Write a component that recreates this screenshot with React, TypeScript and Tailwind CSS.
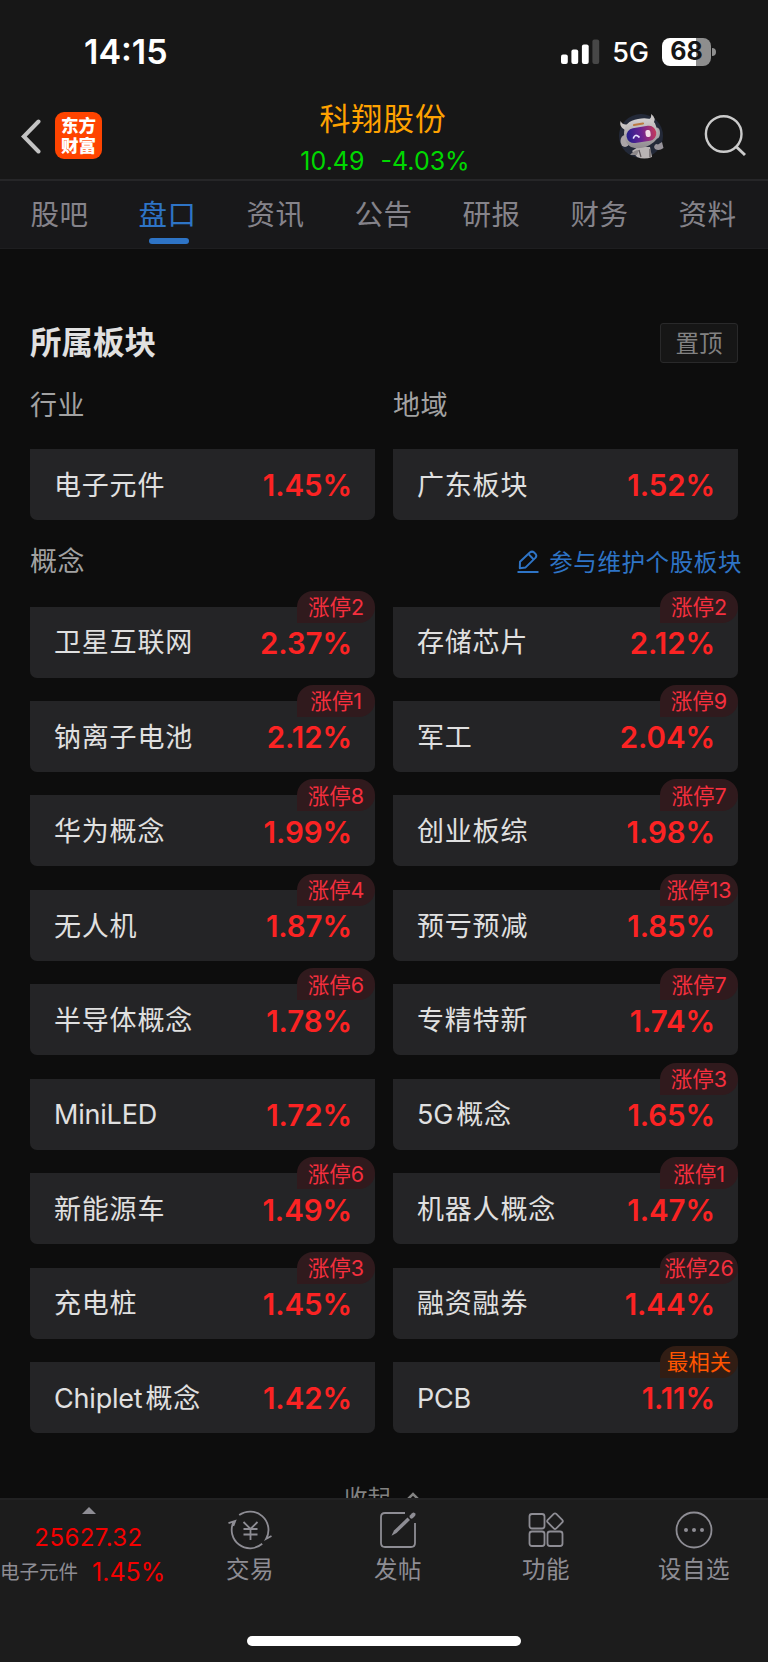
import React from 'react';

interface Board {
  name: string;
  latin?: string;
  change: string;
  tag?: string;
  hot?: boolean;
}

const tabs = ['股吧', '盘口', '资讯', '公告', '研报', '财务', '资料'];

const concepts: Board[] = [
  { name: '卫星互联网', change: '2.37%', tag: '涨停2' },
  { name: '存储芯片', change: '2.12%', tag: '涨停2' },
  { name: '钠离子电池', change: '2.12%', tag: '涨停1' },
  { name: '军工', change: '2.04%', tag: '涨停9' },
  { name: '华为概念', change: '1.99%', tag: '涨停8' },
  { name: '创业板综', change: '1.98%', tag: '涨停7' },
  { name: '无人机', change: '1.87%', tag: '涨停4' },
  { name: '预亏预减', change: '1.85%', tag: '涨停13' },
  { name: '半导体概念', change: '1.78%', tag: '涨停6' },
  { name: '专精特新', change: '1.74%', tag: '涨停7' },
  { latin: 'MiniLED', name: '', change: '1.72%' },
  { latin: '5G', name: '概念', change: '1.65%', tag: '涨停3' },
  { name: '新能源车', change: '1.49%', tag: '涨停6' },
  { name: '机器人概念', change: '1.47%', tag: '涨停1' },
  { name: '充电桩', change: '1.45%', tag: '涨停3' },
  { name: '融资融券', change: '1.44%', tag: '涨停26' },
  { latin: 'Chiplet', name: '概念', change: '1.42%' },
  { latin: 'PCB', name: '', change: '1.11%', tag: '最相关', hot: true },
];

const BoardCard = ({ name, latin, change, tag, hot }: Board) => (
  <div className="relative flex h-[71px] items-center justify-between rounded-b-[7px] bg-[#242426] pt-[2px] pr-[23px] pl-[24px]">
    <span className="pt-px text-[27px] tracking-[0.8px] text-[#e0e0e0]">
      {latin && <span className="mr-[3px] tracking-[-0.2px]">{latin}</span>}
      {name}
    </span>
    <span className="text-[29.5px] font-semibold tracking-[-0.1px] text-[#fb2323]">{change}</span>
    {tag && (
      <span
        className={`absolute -top-[16px] right-0 flex h-[32px] w-[78px] items-center justify-center rounded-[16px] rounded-bl-none pt-px text-[21.5px] whitespace-nowrap ${
          hot ? 'bg-[#311d14] text-[#ff5500]' : 'bg-[#301a1d] text-[#f52f3e]'
        }`}
      >
        {tag}
      </span>
    )}
  </div>
);

const StatusBar = () => (
  <div className="flex h-[98px] items-center justify-between pt-[5px] pr-[52px] pl-[84px]">
    <span className="text-[34px] font-semibold text-white">14:15</span>
    <div className="flex items-center">
      <svg width="39" height="26" viewBox="0 0 39 26" fill="#fff">
        <rect x="0" y="15.5" width="6.8" height="9.5" rx="2" />
        <rect x="10.4" y="10.5" width="6.8" height="14.5" rx="2" />
        <rect x="20.9" y="5.5" width="6.8" height="19.5" rx="2" />
        <rect x="31.4" y="0.5" width="6.8" height="24.5" rx="2" fill="#474747" />
      </svg>
      <span className="ml-[12px] pt-[3px] text-[27px] font-medium text-white">5G</span>
      <div className="ml-[13px] flex h-[28px] w-[49px] items-center justify-center rounded-[8px] bg-linear-to-r from-white from-69% to-[#8e8e8e] to-69%">
        <span className="text-[25px] font-bold text-[#161616]">68</span>
      </div>
      <div className="ml-[1px] h-[8px] w-[4px] rounded-r-full bg-[#8e8e8e]" />
    </div>
  </div>
);

const RobotAvatar = () => (
  <svg width="48" height="48" viewBox="0 0 48 48">
    <defs>
      <linearGradient id="visor" x1="0" y1="0" x2="1" y2="0">
        <stop offset="0" stopColor="#24208c" />
        <stop offset="0.5" stopColor="#6a2393" />
        <stop offset="1" stopColor="#c53a5c" />
      </linearGradient>
      <linearGradient id="shell" x1="0" y1="0" x2="0" y2="1">
        <stop offset="0" stopColor="#d3d0d0" />
        <stop offset="1" stopColor="#8f8b8f" />
      </linearGradient>
    </defs>
    <circle cx="24" cy="24" r="22" fill="#232938" />
    <path d="M15 39 L21 35 H33 L35 45 Q27 48 20 45 Z" fill="#b9b4b4" />
    <path d="M13 43 Q17 38 22 38 L20 43 Z" fill="#8d888a" />
    <path d="M22 38 L24 45 M33 37 V45" stroke="#5c5558" strokeWidth="1.2" />
    <path d="M37 35 Q38 31 41 32.500 L45 30 L46.500 36 Q42 39.500 38 37 Z" fill="#97939a" />
    <path d="M8 18 Q2 15 3.500 9 Q6 14 12 12 Z M31 7 Q35 7 34 2 Q40 6 36 12 Z" fill="#c9c5c5" />
    <ellipse cx="8" cy="29" rx="4.500" ry="6" fill="#aaa5a8" />
    <ellipse cx="40" cy="21" rx="3" ry="5.500" fill="#aaa5a8" />
    <path d="M7 22 Q7 9 21 7 Q36 4 39 14 Q44 25 37 30 Q26 39 14 35 Q8 32 7 22 Z" fill="url(#shell)" />
    <rect x="9.500" y="15" width="30" height="15" rx="7.500" fill="url(#visor)" transform="rotate(-9 24 23)" />
    <path d="M16.500 26 Q18 21.500 22 25" fill="none" stroke="#e9e4ff" strokeWidth="1.700" strokeLinecap="round" />
    <rect x="28.500" y="18" width="5" height="7" rx="2" fill="#f2dce8" transform="rotate(-8 31 21)" />
    <path d="M17 13 L26 11.500" stroke="#bd7940" strokeWidth="2.200" strokeLinecap="round" />
  </svg>
);

const NavBar = () => (
  <div className="flex h-[83px] justify-between border-b-2 border-[#262628] pr-[22px] pl-[20px]">
    <div className="flex w-[160px] items-center gap-[13px] pb-[6px]">
      <svg width="22" height="36" viewBox="0 0 22 36" fill="none" stroke="#c3c3c3" strokeWidth="4">
        <path d="M18.500 3.500 L3.800 18.500 L18.500 33.500" strokeLinecap="round" />
      </svg>
      <div className="flex h-[47px] w-[47px] flex-col items-center justify-center rounded-[9px] bg-[#ff4400] text-[17.5px] leading-[19.5px] font-black text-white">
        <span>东方</span>
        <span>财富</span>
      </div>
    </div>
    <div className="flex flex-col items-center">
      <span className="h-[42px] text-[31px] leading-[42px] tracking-[0.8px] text-[#ffa200]">科翔股份</span>
      <span className="ml-[4px] flex gap-[16px] pt-[2px] text-[25px] leading-[39px] text-[#00d800]">
        <span>10.49</span>
        <span>-4.03%</span>
      </span>
    </div>
    <div className="flex w-[160px] items-center justify-end gap-[39px] pb-[5px]">
      <RobotAvatar />
      <svg width="42" height="42" viewBox="0 0 42 42" fill="none" stroke="#cbcbcb" strokeWidth="2.4">
        <circle cx="19.700" cy="19" r="17.800" />
        <path d="M31.500 31 L41 40" strokeWidth="3" />
      </svg>
    </div>
  </div>
);

const Pencil = () => (
  <svg width="22" height="24" viewBox="0 0 22 24" fill="none" stroke="#2e74c6" strokeWidth="2" strokeLinejoin="round">
    <path d="M3 11.800 L12.800 2.600 Q15 0.800 17 2.400 L18.600 4 Q20 5.800 18.600 7.600 L8.600 17.400 L2.800 18.200 Z" />
    <path d="M11.800 4.400 L16.500 9.200" />
    <path d="M0.500 22 H21.500" />
  </svg>
);

const actions: { label: string; icon: React.ReactNode }[] = [
  {
    label: '交易',
    icon: (
      <svg width="44" height="40" viewBox="0 0 44 40" fill="none" stroke="#8e8d94" strokeWidth="1.8">
        <path d="M11.200 5.100 A18.400 18.400 0 0 1 38.200 28.800 L43.500 26" />
        <path d="M34.200 33.800 A18.400 18.400 0 0 1 5.500 12 M0.500 13.200 L7.200 10.900 L5.300 16" />
        <path d="M15.500 12 L22.500 19 L29.500 12 M22.500 19 V30 M15.500 19 H29.500 M15.500 24.500 H29.500" />
      </svg>
    ),
  },
  {
    label: '发帖',
    icon: (
      <svg width="38" height="40" viewBox="0 0 38 40" fill="none" stroke="#8e8d94" strokeWidth="1.8">
        <path d="M26 3 H6 Q2 3 2 7 V33 Q2 37 6 37 H32 Q36 37 36 33 V13" />
        <path d="M12.500 25.800 L15 20.500 L28.500 7.600 L31 10 L17.500 23 Z" fill="#8e8d94" stroke="none" />
        <path d="M32.500 6.600 L34.500 4.600" strokeWidth="4" strokeLinecap="round" />
      </svg>
    ),
  },
  {
    label: '功能',
    icon: (
      <svg width="38" height="40" viewBox="0 0 38 40" fill="none" stroke="#8e8d94" strokeWidth="1.8">
        <rect x="2.500" y="4" width="15" height="14.500" rx="2.500" />
        <rect x="2.500" y="21.500" width="15" height="14.500" rx="2.500" />
        <rect x="20.500" y="21.500" width="15" height="14.500" rx="2.500" />
        <rect x="22" y="5.200" width="12" height="12" rx="1.800" transform="rotate(45 28 11.200)" />
      </svg>
    ),
  },
  {
    label: '设自选',
    icon: (
      <svg width="38" height="40" viewBox="0 0 38 40" fill="none" stroke="#8e8d94" strokeWidth="1.8">
        <circle cx="19" cy="20" r="17.500" />
        <g fill="#8e8d94" stroke="none">
          <circle cx="11" cy="20" r="2" />
          <circle cx="19" cy="20" r="2" />
          <circle cx="27" cy="20" r="2" />
        </g>
      </svg>
    ),
  },
];

const BottomBar = () => (
  <div className="flex h-[164px] shrink-0 flex-col justify-between border-t-2 border-[#222223] bg-[#1c1c1c]">
    <div className="flex">
      <div className="flex w-[176px] shrink-0 flex-col pt-[7px]">
        <svg className="ml-[82px]" width="14" height="7" viewBox="0 0 14 7" fill="#8e8d94">
          <path d="M7 0 L14 7 H0 Z" />
        </svg>
        <span className="mt-[7px] w-[177px] text-center text-[24px] leading-[34px] tracking-[0.4px] text-[#f40000]">25627.32</span>
        <span className="flex items-center gap-[14px] whitespace-nowrap leading-[35px]">
          <span className="text-[19.5px] text-[#8e8d94]">电子元件</span>
          <span className="text-[25px] text-[#f40000]">1.45%</span>
        </span>
      </div>
      {actions.map((action) => (
        <div key={action.label} className="flex w-[148px] flex-col items-center pt-[10px]">
          {action.icon}
          <span className="mt-[3px] text-[23.5px] leading-[34px] tracking-[0.5px] text-[#8e8d94]">{action.label}</span>
        </div>
      ))}
    </div>
    <div className="mb-[16px] h-[10px] w-[274px] self-center rounded-full bg-white" />
  </div>
);

export default function App() {
  return (
    <div className="flex h-[1663px] w-[768px] flex-col overflow-hidden border-b border-white bg-[#0d0d0d] font-[Inter,'Noto_Sans_CJK_SC',sans-serif]">
      <header className="bg-[#171717]">
        <StatusBar />
        <NavBar />
        <nav className="flex h-[68px] border-b border-[#1e1e20] bg-[#18181a] px-[6px]">
          {tabs.map((tab) => (
            <div
              key={tab}
              className={`relative flex flex-1 items-center justify-center pt-[2px] pr-[1px] text-[28.5px] tracking-[0.6px] ${
                tab === '盘口' ? 'text-[#2e74c6]' : 'text-[#85838a]'
              }`}
            >
              {tab}
              {tab === '盘口' && (
                <span className="absolute bottom-[4px] left-[34.5px] h-[6px] w-[40px] rounded-full bg-[#2e74c6]" />
              )}
            </div>
          ))}
        </nav>
      </header>

      <main className="flex h-[1249px] shrink-0 flex-col overflow-hidden px-[30px] pt-[74px]">
        <div className="flex h-[40px] shrink-0 items-center justify-between">
          <h2 className="text-[31.5px] font-semibold text-[#e0e0e0]">所属板块</h2>
          <button className="h-[40px] w-[78px] rounded-[3px] border-[1.5px] border-[#29292a] bg-[#161616] text-[23.5px] leading-[37px] text-[#828282]">
            置顶
          </button>
        </div>

        <div className="grid shrink-0 grid-cols-2 gap-x-[18px]">
          <span className="h-[86px] pt-[23px] text-[27px] leading-[40px] tracking-[0.5px] text-[#a2a2a2]">行业</span>
          <span className="h-[86px] pt-[23px] text-[27px] leading-[40px] tracking-[0.5px] text-[#a2a2a2]">地域</span>
          <BoardCard name="电子元件" change="1.45%" />
          <BoardCard name="广东板块" change="1.52%" />
        </div>

        <div className="flex h-[86.5px] shrink-0 items-center justify-between pb-[2px]">
          <span className="text-[27px] tracking-[0.5px] text-[#a2a2a2]">概念</span>
          <span className="-mr-[4px] flex items-center gap-[10px] text-[23.5px] tracking-[0.6px] text-[#2e74c6]">
            <Pencil />
            参与维护个股板块
          </span>
        </div>

        <div className="grid shrink-0 grid-cols-2 gap-x-[18px] gap-y-[23.45px]">
          {concepts.map((board) => (
            <BoardCard key={board.change + board.name} {...board} />
          ))}
        </div>

        {/* collapse toggle, partly under the bottom bar */}
        <div className="mt-[48px] flex shrink-0 items-center justify-center gap-[15px] pr-[4px] text-[23.5px] leading-[36px] text-[#828282]">
          收起
          <svg className="mb-[4px]" width="14" height="10" viewBox="0 0 14 10" fill="none" stroke="#828282" strokeWidth="2.5">
            <path d="M1 8 L7 2 L13 8" />
          </svg>
        </div>
      </main>

      <BottomBar />
    </div>
  );
}
